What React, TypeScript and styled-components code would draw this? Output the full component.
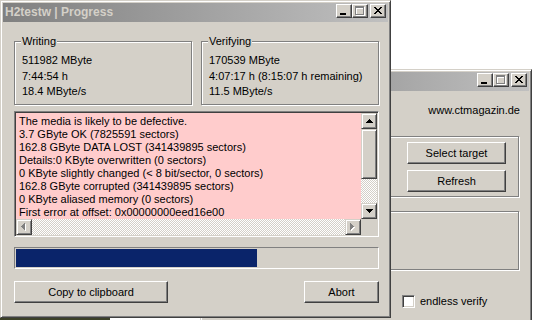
import React from "react";
import styled, { createGlobalStyle } from "styled-components";

const GlobalStyle = createGlobalStyle`
  html, body { margin: 0; padding: 0; background: #ffffff; }
  body { font-family: "Liberation Sans", Arial, sans-serif; font-size: 11px; color: #000; }
`;

const FACE = "#d4d0c8";
const SHADOW = "#808080";
const DARK = "#404040";

const Desktop = styled.div`
  position: relative;
  width: 533px;
  height: 320px;
  overflow: hidden;
  background: linear-gradient(#3d4128, #3d4128) no-repeat 0 318px / 110px 2px, #ffffff;
`;

const Window = styled.div<{ $x: number; $y: number; $w: number; $h: number }>`
  position: absolute;
  left: ${(p) => p.$x}px;
  top: ${(p) => p.$y}px;
  width: ${(p) => p.$w}px;
  height: ${(p) => p.$h}px;
  box-sizing: border-box;
  background: ${FACE};
  border: 1px solid;
  border-color: ${FACE} ${DARK} ${DARK} ${FACE};
  box-shadow: inset 1px 1px #fff, inset -1px -1px ${SHADOW};
  padding: 2px;
  display: flex;
  flex-direction: column;
`;

const TitleBar = styled.div`
  height: 19px;
  flex-shrink: 0;
  display: flex;
  align-items: center;
  padding: 0 2px;
  box-sizing: border-box;
  background: linear-gradient(to right, #808080, #c0c0c0);
`;

const TitleText = styled.div`
  flex: 1;
  color: ${FACE};
  font-weight: bold;
  font-size: 12px;
  line-height: 19px;
  white-space: nowrap;
`;

const CaptionGroup = styled.div`
  align-self: flex-start;
  margin-top: 1px;
  display: flex;
`;

const CaptionButton = styled.div<{ $gap?: boolean }>`
  width: 16px;
  height: 14px;
  box-sizing: border-box;
  margin-left: ${(p) => (p.$gap ? 2 : 0)}px;
  background: ${FACE};
  border: 1px solid;
  border-color: #fff ${DARK} ${DARK} #fff;
  box-shadow: inset -1px -1px ${SHADOW};
  display: flex;
  svg { display: block; }
`;

const Body = styled.div`
  flex: 1;
  display: flex;
  flex-direction: column;
  padding: 19px 9px 0 11px;
`;

const GroupsRow = styled.div`
  display: grid;
  grid-template-columns: 1fr 1fr;
  gap: 9px;
`;

const GroupBox = styled.div<{ $h: number }>`
  position: relative;
  height: ${(p) => p.$h}px;
  box-sizing: border-box;
  border: 1px solid ${SHADOW};
  box-shadow: inset 1px 1px #fff, 1px 1px #fff;
`;

const StatGroup = styled(GroupBox)`
  padding: 11px 0 0 7px;
  line-height: 15.6px;
  white-space: nowrap;
`;

const Legend = styled.div`
  position: absolute;
  top: -7px;
  left: 6px;
  padding: 0 1px;
  background: ${FACE};
  line-height: 13px;
`;

const LogBox = styled.div`
  margin-top: 6px;
  height: 126px;
  box-sizing: border-box;
  border: 1px solid;
  border-color: ${SHADOW} #fff #fff ${SHADOW};
  box-shadow: inset 1px 1px ${DARK}, inset -1px -1px ${FACE};
  padding: 1px;
  display: grid;
  grid-template-columns: 1fr 16px;
  grid-template-rows: 1fr 16px;
  background: ${FACE};
`;

const LogText = styled.div`
  background: #ffcccc;
  padding: 2px 3px;
  line-height: 13px;
  overflow: hidden;
  white-space: nowrap;
`;

const VScroll = styled.div`
  display: flex;
  flex-direction: column;
`;

const HScroll = styled.div`
  display: flex;
`;

const Track = styled.div`
  flex: 1;
  background: repeating-conic-gradient(#ffffff 0 25%, ${FACE} 0 50%) 0 0 / 2px 2px;
`;

const Bevel = styled.div`
  box-sizing: border-box;
  background: ${FACE};
  border: 1px solid;
  border-color: ${FACE} ${DARK} ${DARK} ${FACE};
  box-shadow: inset 1px 1px #fff, inset -1px -1px ${SHADOW};
`;

const ScrollButton = styled(Bevel)`
  width: 16px;
  height: 16px;
  flex-shrink: 0;
  display: flex;
  align-items: center;
  justify-content: center;
  svg { display: block; }
`;

const Thumb = styled(Bevel)`
  height: 50px;
  flex-shrink: 0;
`;

const Corner = styled.div`
  background: ${FACE};
`;

const Progress = styled.div`
  margin-top: 10px;
  height: 22px;
  box-sizing: border-box;
  border: 1px solid;
  border-color: ${SHADOW} #fff #fff ${SHADOW};
  padding: 1px;
`;

const ProgressFill = styled.div`
  height: 100%;
  background: #0a246a;
`;

const ButtonRow = styled.div`
  margin-top: 12px;
  display: flex;
  justify-content: space-between;
`;

const PushButton = styled.button<{ $w: number }>`
  width: ${(p) => p.$w}px;
  height: 22px;
  box-sizing: border-box;
  padding: 0;
  margin: 0;
  background: ${FACE};
  border: 1px solid;
  border-color: #fff ${DARK} ${DARK} #fff;
  box-shadow: inset -1px -1px ${SHADOW};
  font-family: "Liberation Sans", Arial, sans-serif;
  font-size: 11px;
  color: #000;
  line-height: 20px;
`;

const Body2 = styled.div`
  flex: 1;
  display: grid;
  grid-template-columns: 1fr 117px;
  align-content: start;
  padding: 0 10px 0 3px;
`;

const Url = styled.div`
  grid-column: 1 / -1;
  text-align: right;
  margin-top: 13px;
  line-height: 13px;
  margin-right: -1px;
`;

const TargetGroup = styled(GroupBox)`
  grid-column: 1 / -1;
  margin-top: 19px;
  display: flex;
  flex-direction: column;
  align-items: flex-end;
  gap: 6px;
  padding: 5px 12px 0 0;
`;

const EmptyGroup = styled(GroupBox)`
  grid-column: 1 / -1;
  margin-top: 14px;
`;

const CheckRow = styled.label`
  grid-column: 2;
  margin-top: 25px;
  display: flex;
  align-items: center;
  gap: 5px;
  line-height: 13px;
`;

const CheckBox = styled.span`
  width: 13px;
  height: 13px;
  box-sizing: border-box;
  background: #fff;
  border: 1px solid;
  border-color: ${SHADOW} #fff #fff ${SHADOW};
  box-shadow: inset 1px 1px ${DARK}, inset -1px -1px ${FACE};
`;

type Px = [number, number, number];
const pix = (runs: Px[]) => runs.map(([x, y, w]) => `M${x} ${y}h${w}v1h-${w}z`).join("");

const X_PATH = pix([
  [3, 2, 2], [9, 2, 2],
  [4, 3, 2], [8, 3, 2],
  [5, 4, 4],
  [6, 5, 2],
  [5, 6, 4],
  [4, 7, 2], [8, 7, 2],
  [3, 8, 2], [9, 8, 2],
]);

const MinIcon = () => (
  <svg width="14" height="12" viewBox="0 0 14 12" shapeRendering="crispEdges">
    <rect x="3" y="8" width="6" height="2" fill="#000" />
  </svg>
);

const MaxIcon = () => (
  <svg width="14" height="12" viewBox="0 0 14 12" shapeRendering="crispEdges">
    <path d="M3 2h9v9h-9zM4 4v6h7v-6z" fill="#fff" fillRule="evenodd" />
    <path d="M2 1h9v9h-9zM3 3v6h7v-6z" fill={SHADOW} fillRule="evenodd" />
  </svg>
);

const CloseIcon = () => (
  <svg width="14" height="12" viewBox="0 0 14 12" shapeRendering="crispEdges">
    <path d={X_PATH} fill="#000" />
  </svg>
);

const Caption = () => (
  <CaptionGroup>
    <CaptionButton><MinIcon /></CaptionButton>
    <CaptionButton><MaxIcon /></CaptionButton>
    <CaptionButton $gap><CloseIcon /></CaptionButton>
  </CaptionGroup>
);

const ArrowUp = () => (
  <svg width="7" height="4" viewBox="0 0 7 4" shapeRendering="crispEdges">
    <path d={pix([[3, 0, 1], [2, 1, 3], [1, 2, 5], [0, 3, 7]])} fill="#000" />
  </svg>
);
const ArrowDown = () => (
  <svg width="7" height="4" viewBox="0 0 7 4" shapeRendering="crispEdges">
    <path d={pix([[0, 0, 7], [1, 1, 5], [2, 2, 3], [3, 3, 1]])} fill="#000" />
  </svg>
);
const leftRuns: Px[] = [[3, 0, 1], [2, 1, 2], [1, 2, 3], [0, 3, 4], [1, 4, 3], [2, 5, 2], [3, 6, 1]];
const rightRuns: Px[] = [[0, 0, 1], [0, 1, 2], [0, 2, 3], [0, 3, 4], [0, 4, 3], [0, 5, 2], [0, 6, 1]];
const shift = (r: Px[]) => r.map(([x, y, w]) => [x + 1, y + 1, w] as Px);
const ArrowLeftDisabled = () => (
  <svg width="6" height="8" viewBox="0 0 6 8" shapeRendering="crispEdges">
    <path d={pix(shift(leftRuns))} fill="#fff" />
    <path d={pix(leftRuns)} fill={SHADOW} />
  </svg>
);
const ArrowRightDisabled = () => (
  <svg width="6" height="8" viewBox="0 0 6 8" shapeRendering="crispEdges">
    <path d={pix(shift(rightRuns))} fill="#fff" />
    <path d={pix(rightRuns)} fill={SHADOW} />
  </svg>
);

const writing = ["511982 MByte", "7:44:54 h", "18.4 MByte/s"];
const verifying = ["170539 MByte", "4:07:17 h (8:15:07 h remaining)", "11.5 MByte/s"];
const log = [
  "The media is likely to be defective.",
  "3.7 GByte OK (7825591 sectors)",
  "162.8 GByte DATA LOST (341439895 sectors)",
  "Details:0 KByte overwritten (0 sectors)",
  "0 KByte slightly changed (< 8 bit/sector, 0 sectors)",
  "162.8 GByte corrupted (341439895 sectors)",
  "0 KByte aliased memory (0 sectors)",
  "First error at offset: 0x00000000eed16e00",
];

const totalMB = 511982;
const progress = (511982 + 170539) / (2 * totalMB);

export default function App() {
  return (
    <>
      <GlobalStyle />
      <Desktop>
        <Window $x={200} $y={69} $w={332} $h={270}>
          <TitleBar>
            <TitleText />
            <Caption />
          </TitleBar>
          <Body2>
            <Url>www.ctmagazin.de</Url>
            <TargetGroup $h={61}>
              <PushButton $w={99}>Select target</PushButton>
              <PushButton $w={99}>Refresh</PushButton>
            </TargetGroup>
            <EmptyGroup $h={59} />
            <CheckRow>
              <CheckBox />
              <span>endless verify</span>
            </CheckRow>
          </Body2>
        </Window>

        <Window $x={0} $y={0} $w={391} $h={318}>
          <TitleBar>
            <TitleText>H2testw | Progress</TitleText>
            <Caption />
          </TitleBar>
          <Body>
            <GroupsRow>
              <StatGroup $h={64}>
                <Legend>Writing</Legend>
                {writing.map((l) => <div key={l}>{l}</div>)}
              </StatGroup>
              <StatGroup $h={64}>
                <Legend>Verifying</Legend>
                {verifying.map((l) => <div key={l}>{l}</div>)}
              </StatGroup>
            </GroupsRow>
            <LogBox>
              <LogText>
                {log.map((l) => <div key={l}>{l}</div>)}
              </LogText>
              <VScroll>
                <ScrollButton><ArrowUp /></ScrollButton>
                <Thumb />
                <Track />
                <ScrollButton><ArrowDown /></ScrollButton>
              </VScroll>
              <HScroll>
                <ScrollButton><ArrowLeftDisabled /></ScrollButton>
                <Track />
                <ScrollButton><ArrowRightDisabled /></ScrollButton>
              </HScroll>
              <Corner />
            </LogBox>
            <Progress>
              <ProgressFill style={{ width: `${(progress * 100).toFixed(2)}%` }} />
            </Progress>
            <ButtonRow>
              <PushButton $w={154}>Copy to clipboard</PushButton>
              <PushButton $w={75}>Abort</PushButton>
            </ButtonRow>
          </Body>
        </Window>
      </Desktop>
    </>
  );
}
